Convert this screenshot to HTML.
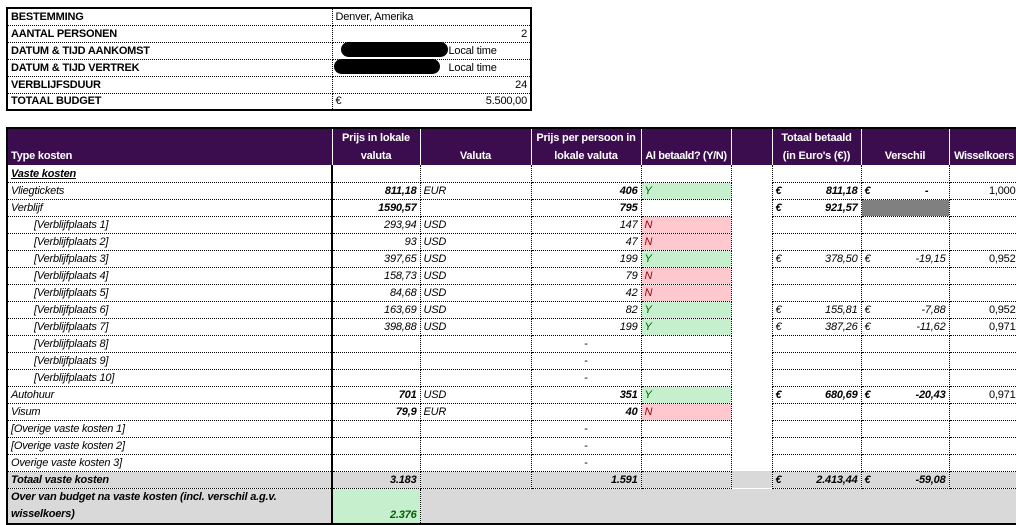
<!DOCTYPE html>
<html><head><meta charset="utf-8"><style>
*{margin:0;padding:0;box-sizing:border-box}
body{width:1016px;height:524px;background:#fff;font-family:"Liberation Sans",sans-serif;font-size:11px;color:#000;position:relative;overflow:hidden;letter-spacing:-0.2px}
table{border-collapse:collapse;table-layout:fixed;position:absolute}
td{height:17px;padding:0 3px;white-space:nowrap;overflow:hidden;border-bottom:1px dotted #000;border-right:1px dotted #000;vertical-align:bottom;line-height:15px}
#top{left:6px;top:7px;width:526px;border:2px solid #000}
#top td.l{font-weight:bold}
#main{left:6px;top:127px;width:1012px;border:2px solid #000;border-right:none}
#main thead td{background:#3b0d4f;color:#fff;font-weight:bold;text-align:center;height:37px;line-height:18px;border-bottom:none;border-right:1px dotted #fff;white-space:normal}
#main thead td.tk{text-align:left}
#main thead td.nw{white-space:nowrap;padding:0 1px;letter-spacing:-0.4px}
.r{text-align:right}
.it{font-style:italic}
.b{font-weight:bold}
.ind{padding-left:26px}
.y{background:#c6efce;color:#006100;font-style:italic}
.n{background:#ffc7ce;color:#9c0006;font-style:italic}
.gap{border-bottom:none;border-right:1px dotted #000}
.thk{border-right:2px solid #000}
.gray td{background:#d9d9d9}
.dk{background:#808080}
.blob{position:absolute;background:#000;border-radius:9px}
.eu{display:flex;justify-content:space-between}
</style></head><body>
<table id="top">
<colgroup><col style="width:325px"><col></colgroup>
<tr><td class="l">BESTEMMING</td><td>Denver, Amerika</td></tr>
<tr><td class="l">AANTAL PERSONEN</td><td class="r">2</td></tr>
<tr><td class="l">DATUM &amp; TIJD AANKOMST</td><td style="padding-left:116px">Local time</td></tr>
<tr><td class="l">DATUM &amp; TIJD VERTREK</td><td style="padding-left:116px">Local time</td></tr>
<tr><td class="l">VERBLIJFSDUUR</td><td class="r">24</td></tr>
<tr><td class="l" style="border-bottom:none">TOTAAL BUDGET</td><td style="border-bottom:none"><div class="eu"><span>€</span><span>5.500,00</span></div></td></tr>
</table>
<div class="blob" style="left:341px;top:42px;width:107px;height:15px"></div>
<div class="blob" style="left:334px;top:59px;width:106px;height:15px"></div>

<table id="main">
<colgroup><col style="width:325px"><col style="width:88px"><col style="width:111px"><col style="width:110px"><col style="width:90px"><col style="width:41px"><col style="width:89px"><col style="width:88px"><col style="width:70px"></colgroup>
<thead><tr><td class="tk thk" style="vertical-align:bottom">Type kosten</td><td>Prijs in lokale valuta</td><td style="vertical-align:bottom">Valuta</td><td>Prijs per persoon in lokale valuta</td><td class="nw" style="vertical-align:bottom">Al betaald? (Y/N)</td><td></td><td>Totaal betaald (in Euro's (€))</td><td style="vertical-align:bottom">Verschil</td><td class="nw" style="vertical-align:bottom">Wisselkoers</td></tr></thead>
<tbody>
<tr><td class="thk b it" style="text-decoration:underline">Vaste kosten </td><td></td><td></td><td></td><td></td><td class="gap"></td><td></td><td></td><td></td></tr>
<tr><td class="thk it">Vliegtickets</td><td class="r b it">811,18</td><td class="it">EUR</td><td class="r b it">406</td><td class="y">Y</td><td class="gap"></td><td class="b it"><div class="eu"><span>€</span><span>811,18</span></div></td><td class="b it"><div class="eu"><span>€</span><span>-&nbsp;&nbsp;&nbsp;&nbsp;&nbsp;&nbsp;</span></div></td><td class="r">1,000</td></tr>
<tr><td class="thk it">Verblijf</td><td class="r b it">1590,57</td><td></td><td class="r b it">795</td><td></td><td class="gap"></td><td class="b it"><div class="eu"><span>€</span><span>921,57</span></div></td><td class="dk"></td><td></td></tr>
<tr><td class="thk it ind">[Verblijfplaats 1]</td><td class="r it">293,94</td><td class="it">USD</td><td class="r it">147</td><td class="n">N</td><td class="gap"></td><td></td><td></td><td></td></tr>
<tr><td class="thk it ind">[Verblijfplaats 2]</td><td class="r it">93</td><td class="it">USD</td><td class="r it">47</td><td class="n">N</td><td class="gap"></td><td></td><td></td><td></td></tr>
<tr><td class="thk it ind">[Verblijfplaats 3]</td><td class="r it">397,65</td><td class="it">USD</td><td class="r it">199</td><td class="y">Y</td><td class="gap"></td><td class="it"><div class="eu"><span>€</span><span>378,50</span></div></td><td class="it"><div class="eu"><span>€</span><span>-19,15</span></div></td><td class="r">0,952</td></tr>
<tr><td class="thk it ind">[Verblijfplaats 4]</td><td class="r it">158,73</td><td class="it">USD</td><td class="r it">79</td><td class="n">N</td><td class="gap"></td><td></td><td></td><td></td></tr>
<tr><td class="thk it ind">[Verblijfplaats 5]</td><td class="r it">84,68</td><td class="it">USD</td><td class="r it">42</td><td class="n">N</td><td class="gap"></td><td></td><td></td><td></td></tr>
<tr><td class="thk it ind">[Verblijfplaats 6]</td><td class="r it">163,69</td><td class="it">USD</td><td class="r it">82</td><td class="y">Y</td><td class="gap"></td><td class="it"><div class="eu"><span>€</span><span>155,81</span></div></td><td class="it"><div class="eu"><span>€</span><span>-7,88</span></div></td><td class="r">0,952</td></tr>
<tr><td class="thk it ind">[Verblijfplaats 7]</td><td class="r it">398,88</td><td class="it">USD</td><td class="r it">199</td><td class="y">Y</td><td class="gap"></td><td class="it"><div class="eu"><span>€</span><span>387,26</span></div></td><td class="it"><div class="eu"><span>€</span><span>-11,62</span></div></td><td class="r">0,971</td></tr>
<tr><td class="thk it ind">[Verblijfplaats 8]</td><td></td><td></td><td style="text-align:center">-</td><td></td><td class="gap"></td><td></td><td></td><td></td></tr>
<tr><td class="thk it ind">[Verblijfplaats 9]</td><td></td><td></td><td style="text-align:center">-</td><td></td><td class="gap"></td><td></td><td></td><td></td></tr>
<tr><td class="thk it ind">[Verblijfplaats 10]</td><td></td><td></td><td style="text-align:center">-</td><td></td><td class="gap"></td><td></td><td></td><td></td></tr>
<tr><td class="thk it">Autohuur</td><td class="r b it">701</td><td class="it">USD</td><td class="r b it">351</td><td class="y">Y</td><td class="gap"></td><td class="b it"><div class="eu"><span>€</span><span>680,69</span></div></td><td class="b it"><div class="eu"><span>€</span><span>-20,43</span></div></td><td class="r">0,971</td></tr>
<tr><td class="thk it">Visum</td><td class="r b it">79,9</td><td class="it">EUR</td><td class="r b it">40</td><td class="n">N</td><td class="gap"></td><td></td><td></td><td></td></tr>
<tr><td class="thk it">[Overige vaste kosten 1]</td><td></td><td></td><td style="text-align:center">-</td><td></td><td class="gap"></td><td></td><td></td><td></td></tr>
<tr><td class="thk it">[Overige vaste kosten 2]</td><td></td><td></td><td style="text-align:center">-</td><td></td><td class="gap"></td><td></td><td></td><td></td></tr>
<tr><td class="thk it">Overige vaste kosten 3]</td><td></td><td></td><td style="text-align:center">-</td><td></td><td class="gap"></td><td></td><td></td><td></td></tr>
<tr class="gray"><td class="thk b it">Totaal vaste kosten</td><td class="r b it">3.183</td><td></td><td class="r b it">1.591</td><td></td><td class="gap"></td><td class="b it"><div class="eu"><span>€</span><span>2.413,44</span></div></td><td class="b it"><div class="eu"><span>€</span><span>-59,08</span></div></td><td></td></tr>
<tr class="gray"><td class="thk b it" style="height:34px;white-space:normal;line-height:17px;border-bottom:2px solid #000">Over van budget na vaste kosten (incl. verschil a.g.v. wisselkoers)</td><td class="r b it" style="background:#c6efce;color:#006100;border-bottom:2px solid #000">2.376</td><td colspan="7" style="border-bottom:2px solid #000;border-right:none"></td></tr>
</tbody></table>
</body></html>
